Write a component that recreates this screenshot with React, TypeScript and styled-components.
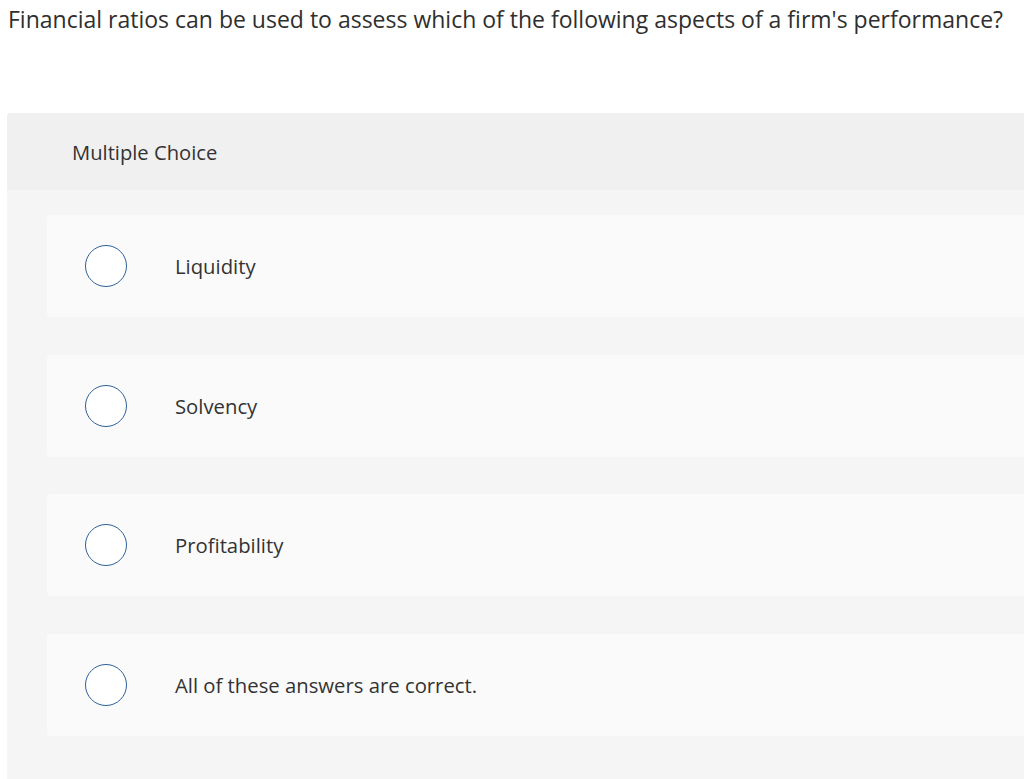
import React from "react";
import styled, { createGlobalStyle } from "styled-components";

const Global = createGlobalStyle`
  html, body { margin: 0; padding: 0; background: #ffffff; }
  body { font-family: "Open Sans", "Liberation Sans", sans-serif; color: #333333; overflow: hidden; }
`;

const Page = styled.div`
  width: 1024px;
  height: 779px;
  overflow: hidden;
`;

const Question = styled.div`
  font-size: 23px;
  line-height: 28px;
  padding: 5px 0 0 8px;
  height: 113px;
  box-sizing: border-box;
  color: #2f2f2f;
  white-space: nowrap;
`;

const Panel = styled.section`
  margin-left: 7px;
  border-radius: 4px 0 0 0;
  background: #f5f5f5;
  height: 666px;
  overflow: hidden;
`;

const PanelHeader = styled.div`
  height: 77px;
  background: #f0f0f0;
  display: flex;
  align-items: center;
  padding-left: 65px;
  font-size: 20.2px;
  color: #333333;
`;

const Options = styled.div`
  display: flex;
  flex-direction: column;
  gap: 37.5px;
  padding: 25px 0 0 40px;
`;

const Card = styled.label`
  height: 102px;
  background: #fafafa;
  border-radius: 4px 0 0 4px;
  display: flex;
  align-items: center;
  padding-left: 38px;
  cursor: pointer;
`;

const Radio = styled.span`
  width: 40px;
  height: 40px;
  border-radius: 50%;
  border: 1.5px solid #2d6199;
  background: #ffffff;
  flex: none;
`;

const Label = styled.span`
  margin-left: 48px;
  font-size: 20.3px;
  color: #333333;
`;

const choices = ["Liquidity", "Solvency", "Profitability", "All of these answers are correct."];

export default function App() {
  return (
    <Page>
      <Global />
      <Question>Financial ratios can be used to assess which of the following aspects of a firm's performance?</Question>
      <Panel>
        <PanelHeader>Multiple Choice</PanelHeader>
        <Options>
          {choices.map((c) => (
            <Card key={c}>
              <Radio />
              <Label>{c}</Label>
            </Card>
          ))}
        </Options>
      </Panel>
    </Page>
  );
}
